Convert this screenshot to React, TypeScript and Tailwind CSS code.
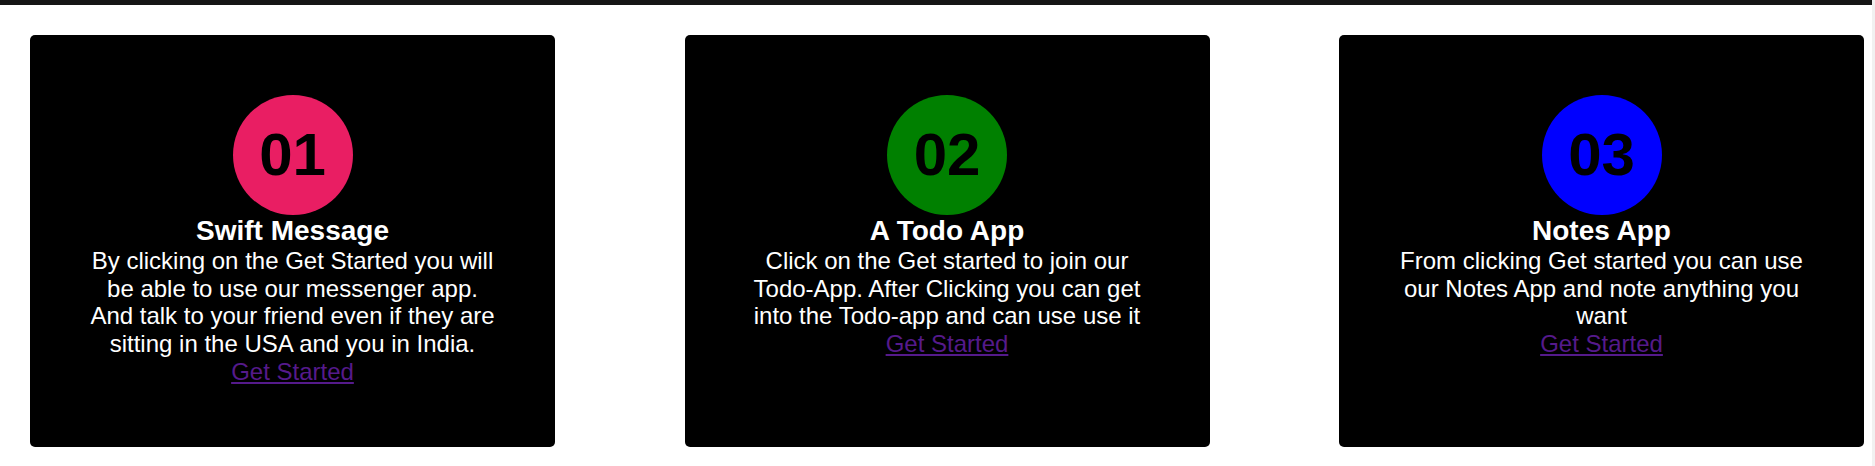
const CARDS = [
  {
    num: '01',
    color: 'bg-[#e91e63]',
    title: 'Swift Message',
    text: 'By clicking on the Get Started you will be able to use our messenger app. And talk to your friend even if they are sitting in the USA and you in India.',
  },
  {
    num: '02',
    color: 'bg-[#008000]',
    title: 'A Todo App',
    text: 'Click on the Get started to join our Todo-App. After Clicking you can get into the Todo-app and can use use it',
  },
  {
    num: '03',
    color: 'bg-[#0000ff]',
    title: 'Notes App',
    text: 'From clicking Get started you can use our Notes App and note anything you want',
  },
];

export default function App() {
  return (
    <div className="flex w-[1875px] h-[466px] bg-white font-['Liberation_Sans',Arial,sans-serif] overflow-hidden">
      <div className="flex-1 flex flex-col">
        {/* top bar */}
        <div className="h-[5px] bg-[#151515] shrink-0" />

        <div className="flex gap-[129.5px] pl-[30px] pt-[30px]">
          {CARDS.map((c) => (
            <div
              key={c.num}
              className="w-[525px] h-[412px] bg-black rounded-[5px] flex flex-col items-center pt-[60px] text-center"
            >
              <div className={`w-[120px] h-[120px] rounded-full ${c.color} flex items-center justify-center`}>
                <span className="text-[60px] font-bold text-black leading-none">{c.num}</span>
              </div>
              <h2 className="text-[28px] font-bold text-white leading-[1.15]">{c.title}</h2>
              <p className="w-[410px] text-[24px] text-white leading-[1.15]">{c.text}</p>
              <a href="#" className="text-[24px] leading-[1.15] text-[#551a8b] underline">
                Get Started
              </a>
            </div>
          ))}
        </div>
      </div>
      {/* scrollbar strip */}
      <div className="w-[3px] bg-[#f1f1f1] shrink-0" />
    </div>
  );
}
